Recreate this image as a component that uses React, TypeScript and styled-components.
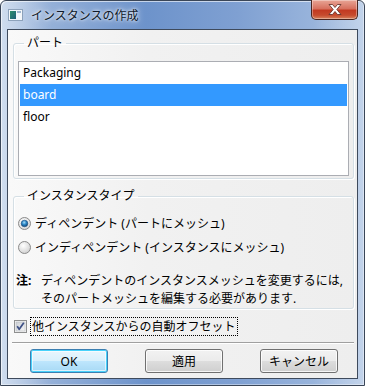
import React from 'react';
import styled, { createGlobalStyle } from 'styled-components';

const GlobalStyle = createGlobalStyle`
  html, body {
    margin: 0;
    padding: 0;
    background: #ffffff;
  }
  * {
    box-sizing: border-box;
  }
`;

const uiFont = `"Noto Sans", "Noto Sans CJK JP", sans-serif`;

const Window = styled.div`
  width: 365px;
  height: 386px;
  display: flex;
  flex-direction: column;
  padding: 0 6px 6px 6px;
  border: 1px solid #3a4658;
  border-radius: 6px 6px 0 0;
  background:
    linear-gradient(to right, rgba(255,255,255,0.35) 0%, rgba(255,255,255,0) 14%, rgba(255,255,255,0) 86%, rgba(255,255,255,0.3) 100%),
    linear-gradient(to right, #b7cbe6 0%, #97b2d9 12%, #6d93cb 40%, #7fa0d2 65%, #a9c1e2 100%);
  box-shadow: inset 1px 1px 0 rgba(255,255,255,0.6), inset -1px -1px 0 rgba(255,255,255,0.4);
  font-family: ${uiFont};
  font-size: 12px;
  color: #000;
`;

const TitleBar = styled.div`
  height: 28px;
  flex: none;
  display: flex;
  align-items: flex-start;
`;

const TitleIcon = styled.svg`
  margin: 8px 0 0 1px;
  flex: none;
`;

const TitleText = styled.div`
  margin: 7px 0 0 8px;
  line-height: 16px;
  font-size: 12px;
  color: #0f1a2a;
  text-shadow: 0 0 6px rgba(255,255,255,0.9), 0 0 3px rgba(255,255,255,0.9);
`;

const CloseButton = styled.div`
  margin: -1px 0 0 auto;
  width: 47px;
  height: 20px;
  display: flex;
  align-items: center;
  justify-content: center;
  border: 1px solid #4a2620;
  border-top: none;
  border-radius: 0 0 5px 5px;
  background: linear-gradient(to bottom, #e8a596 0%, #d7715f 45%, #c23a22 55%, #c64b2e 80%, #d7835e 100%);
  box-shadow: inset 0 0 0 1px rgba(255,255,255,0.35);
`;

const Client = styled.div`
  flex: 1;
  display: flex;
  flex-direction: column;
  padding: 6px 3px 5px 5px;
  border: 1px solid #3e4a5c;
  background: linear-gradient(to right, #f9f9f9 0%, #f1f1f1 40%, #eeeeee 100%);
`;

const Group = styled.fieldset<{ $top?: number }>`
  margin: ${({ $top }) => $top ?? 0}px 0 0 0;
  padding: 11px 4px 2px 4px;
  border: 1px solid #d5dfe5;
  border-radius: 3px;
  box-shadow: inset 1px 1px 0 #ffffff, 1px 1px 0 #ffffff;
  min-width: 0;
`;

const Legend = styled.legend`
  margin-left: 6px;
  padding: 0 3px 0 3px;
  line-height: 14px;
  font-size: 12px;
  color: #000;
`;

const ListBox = styled.div`
  height: 115px;
  border: 1px solid #abadb3;
  background: #ffffff;
  padding: 0 1px;
`;

const ListItem = styled.div<{ $selected?: boolean }>`
  height: 22px;
  line-height: 22px;
  padding-left: 3px;
  background: ${({ $selected }) => ($selected ? '#3399ff' : 'transparent')};
  color: ${({ $selected }) => ($selected ? '#ffffff' : '#000000')};
`;

const OptionRow = styled.label<{ $gap?: number }>`
  display: flex;
  align-items: center;
  height: 18px;
  margin-top: ${({ $gap }) => $gap ?? 0}px;
  gap: 4px;
  white-space: nowrap;
`;

const Note = styled.div`
  margin: 16px 0 0 -2px;
  display: grid;
  grid-template-columns: 25px 1fr;
  line-height: 18px;
  white-space: nowrap;
`;

const NoteLabel = styled.span`
  font-weight: bold;
`;

const CheckRow = styled.div`
  display: flex;
  align-items: center;
  margin-top: 8px;
  height: 19px;
  padding-left: 1px;
  gap: 3px;
`;

const FocusLabel = styled.span`
  height: 19px;
  line-height: 17px;
  padding: 0 1px;
  border: 1px dotted #000;
  white-space: nowrap;
`;

const Separator = styled.div`
  margin: 6px 0 0 -1px;
  height: 1px;
  background: #a0a0a0;
  box-shadow: 0 1px 0 #ffffff;
`;

const ButtonRow = styled.div`
  margin-top: 6px;
  display: flex;
  justify-content: center;
  gap: 37px;
  padding-left: 1px;
`;

const Button = styled.div<{ $default?: boolean }>`
  width: 78px;
  height: 24px;
  display: flex;
  align-items: center;
  justify-content: center;
  border-radius: 3px;
  border: 1px solid ${({ $default }) => ($default ? '#3c7fb1' : '#707070')};
  background: ${({ $default }) =>
    $default
      ? 'linear-gradient(to bottom, #eaf6fd 0%, #d9f0fc 50%, #bee6fd 51%, #a7d9f5 100%)'
      : 'linear-gradient(to bottom, #f2f2f2 0%, #ebebeb 50%, #dddddd 51%, #cfcfcf 100%)'};
  box-shadow: ${({ $default }) =>
    $default
      ? 'inset 0 0 0 1px #48d2fb, inset 0 0 0 2px rgba(255,255,255,0.6)'
      : 'inset 0 0 0 1px rgba(255,255,255,0.8)'};
  font-size: 12px;
`;

function Radio({ checked }: { checked?: boolean }) {
  return (
    <svg width="13" height="13" viewBox="0 0 13 13">
      <defs>
        <radialGradient id={checked ? 'rOn' : 'rOff'} cx="40%" cy="35%" r="70%">
          <stop offset="0%" stopColor={checked ? '#ffffff' : '#ffffff'} />
          <stop offset="100%" stopColor={checked ? '#d4d4d4' : '#cfcfcf'} />
        </radialGradient>
        <radialGradient id="dot" cx="45%" cy="35%" r="70%">
          <stop offset="0%" stopColor="#a8dcf6" />
          <stop offset="45%" stopColor="#2c88c8" />
          <stop offset="100%" stopColor="#0d3a66" />
        </radialGradient>
      </defs>
      <circle cx="6.5" cy="6.5" r="6" fill={`url(#${checked ? 'rOn' : 'rOff'})`} stroke="#8a8a8a" strokeWidth="1" />
      {checked && <circle cx="6.5" cy="6.5" r="3.3" fill="url(#dot)" stroke="#1d4f82" strokeWidth="0.6" />}
    </svg>
  );
}

function CheckBox() {
  return (
    <svg width="13" height="13" viewBox="0 0 13 13">
      <defs>
        <linearGradient id="cb" x1="0" y1="0" x2="1" y2="1">
          <stop offset="0%" stopColor="#cbcfd5" />
          <stop offset="100%" stopColor="#f6f6f6" />
        </linearGradient>
      </defs>
      <rect x="0.5" y="0.5" width="12" height="12" fill="#f4f4f4" stroke="#8e8f8f" />
      <rect x="2" y="2" width="9" height="9" fill="url(#cb)" stroke="#b0b4b9" strokeWidth="0.5" />
      <path d="M3.2 6.3 L5.2 9.3 L9.8 2.8" fill="none" stroke="#3c4f84" strokeWidth="1.7" strokeLinejoin="round" />
    </svg>
  );
}

export default function App() {
  return (
    <>
      <GlobalStyle />
      <Window>
        <TitleBar>
          <TitleIcon width="15" height="12" viewBox="0 0 15 12">
            <defs>
              <linearGradient id="ic" x1="0" y1="0" x2="1" y2="1">
                <stop offset="0%" stopColor="#2f8f6b" />
                <stop offset="100%" stopColor="#1e5f7a" />
              </linearGradient>
            </defs>
            <rect x="0.5" y="0.5" width="14" height="11" fill="#f4f7fa" stroke="#8da2bb" />
            <rect x="2" y="2" width="6" height="8" fill="url(#ic)" />
            <rect x="9" y="2" width="4" height="2" fill="#9fb6cf" />
          </TitleIcon>
          <TitleText>インスタンスの作成</TitleText>
          <CloseButton>
            <svg width="14" height="11" viewBox="0 0 14 11">
              <path
                d="M1 0.5 H4.5 L7 3.5 L9.5 0.5 H13 L8.8 5.5 L13 10.5 H9.5 L7 7.5 L4.5 10.5 H1 L5.2 5.5 Z"
                fill="#ffffff"
                stroke="#5a2a22"
                strokeWidth="0.8"
                strokeLinejoin="round"
              />
            </svg>
          </CloseButton>
        </TitleBar>
        <Client>
          <Group>
            <Legend>パート</Legend>
            <ListBox>
              <ListItem>Packaging</ListItem>
              <ListItem $selected>board</ListItem>
              <ListItem>floor</ListItem>
            </ListBox>
          </Group>
          <Group $top={10} style={{ paddingBottom: 0 }}>
            <Legend>インスタンスタイプ</Legend>
            <OptionRow>
              <Radio checked />
              <span>ディペンデント (パートにメッシュ)</span>
            </OptionRow>
            <OptionRow $gap={6}>
              <Radio />
              <span>インディペンデント (インスタンスにメッシュ)</span>
            </OptionRow>
            <Note>
              <NoteLabel>注:</NoteLabel>
              <span>ディペンデントのインスタンスメッシュを変更するには,</span>
              <span />
              <span>そのパートメッシュを編集する必要があります.</span>
            </Note>
          </Group>
          <CheckRow>
            <CheckBox />
            <FocusLabel>他インスタンスからの自動オフセット</FocusLabel>
          </CheckRow>
          <Separator />
          <ButtonRow>
            <Button $default>OK</Button>
            <Button>適用</Button>
            <Button>キャンセル</Button>
          </ButtonRow>
        </Client>
      </Window>
    </>
  );
}
